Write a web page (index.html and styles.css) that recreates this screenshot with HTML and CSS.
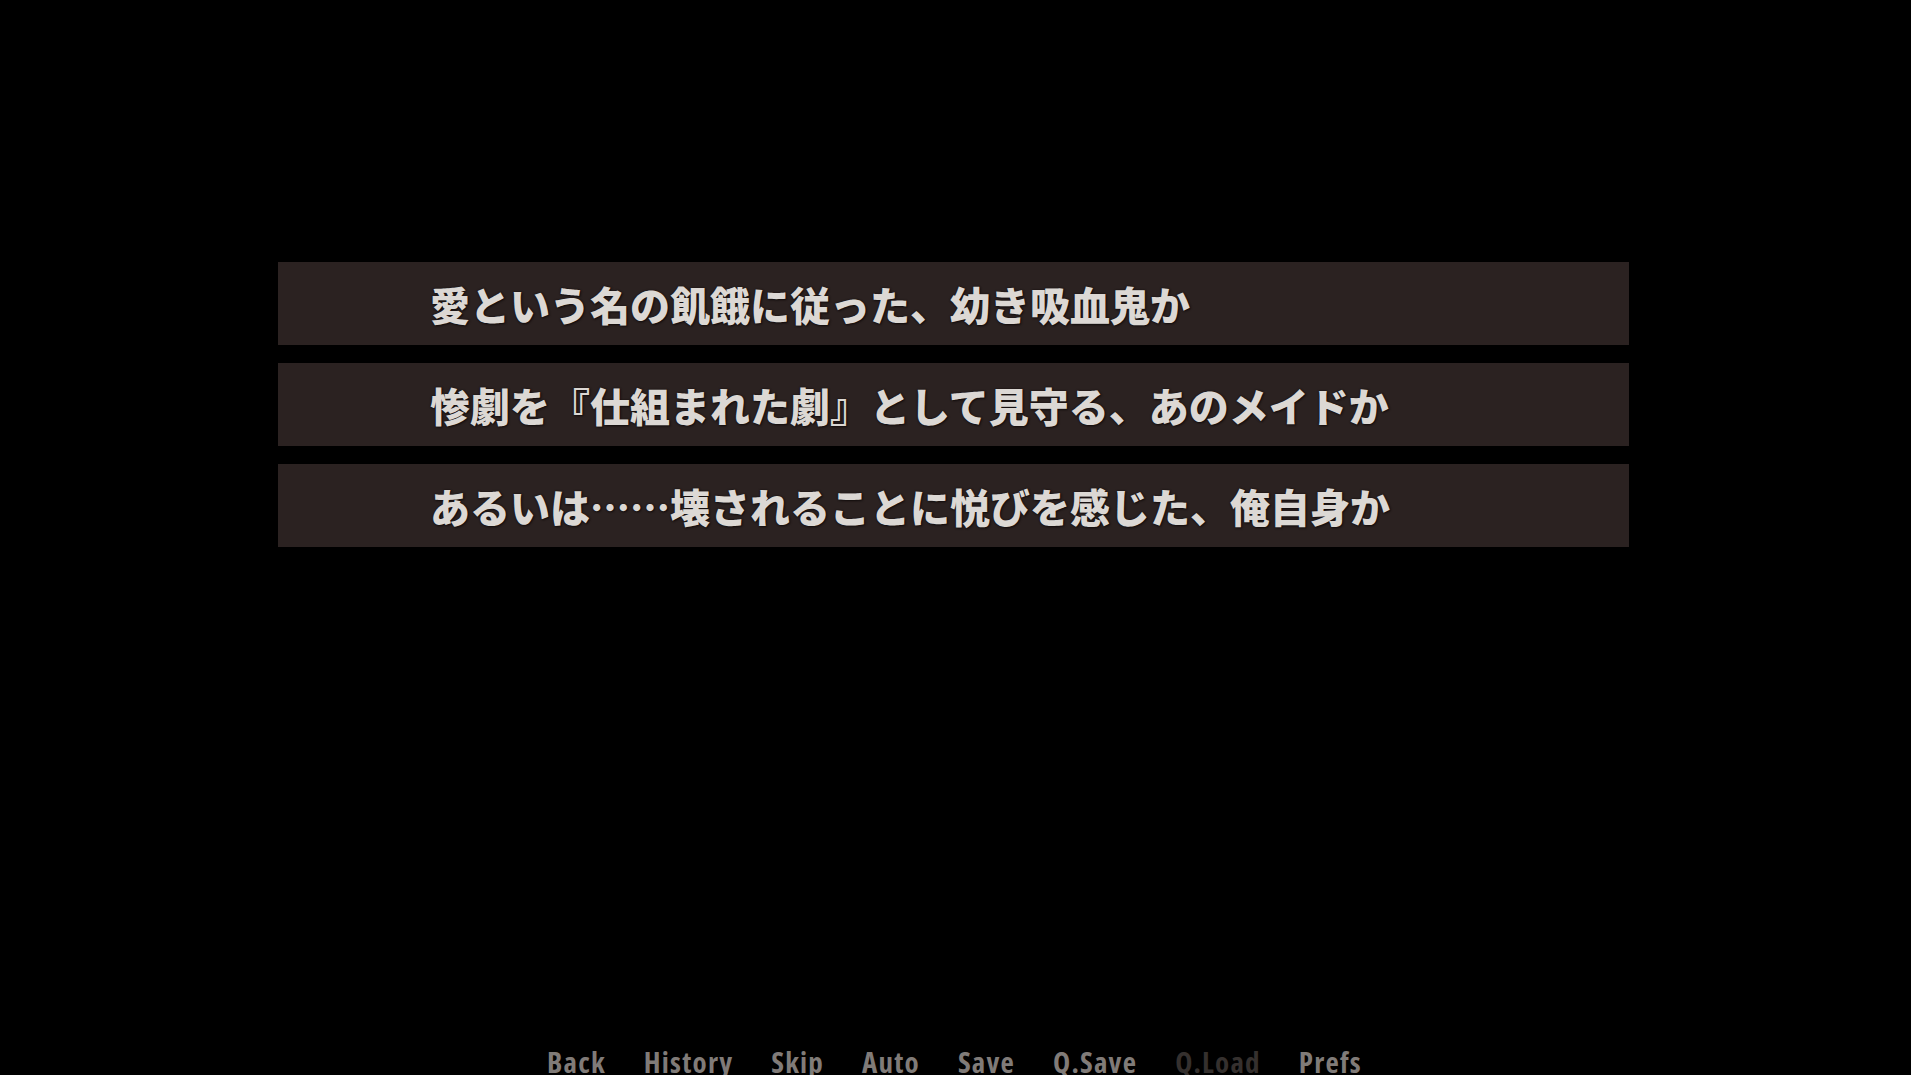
FILE: index.html
```html
<!DOCTYPE html>
<html lang="ja">
<head>
<meta charset="utf-8">
<title>Choice</title>
<link rel="stylesheet" href="styles.css">
</head>
<body>
<div class="screen">
  <div class="choices">
    <div class="choice"><span class="choice-text">愛という名の飢餓に従った、幼き吸血鬼か</span></div>
    <div class="choice"><span class="choice-text">惨劇を『仕組まれた劇』として見守る、あのメイドか</span></div>
    <div class="choice"><span class="choice-text">あるいは……壊されることに悦びを感じた、俺自身か</span></div>
  </div>
  <nav class="quick-menu">
    <span class="qm-item">Back</span>
    <span class="qm-item">History</span>
    <span class="qm-item">Skip</span>
    <span class="qm-item">Auto</span>
    <span class="qm-item">Save</span>
    <span class="qm-item">Q.Save</span>
    <span class="qm-item qm-disabled">Q.Load</span>
    <span class="qm-item">Prefs</span>
  </nav>
</div>
</body>
</html>
```
FILE: styles.css
```css
html, body {
  margin: 0;
  padding: 0;
  background: #000;
}
.screen {
  width: 1911px;
  height: 1075px;
  overflow: hidden;
  background: #000;
  display: flex;
  flex-direction: column;
}
.choices {
  margin-top: 262px;
  margin-left: 278px;
  width: 1351px;
  display: flex;
  flex-direction: column;
  gap: 18px;
}
.choice {
  height: 83px;
  background: #2b2221;
  display: flex;
  align-items: center;
  padding-left: 152px;
  box-sizing: border-box;
}
.choice-text {
  font-family: "Noto Sans CJK JP", "Noto Sans", sans-serif;
  font-weight: 900;
  font-size: 40px;
  line-height: 1;
  color: #dcd8d4;
  text-shadow: 0 0 2px #140e0e, 1px 1px 2px #140e0e;
}
.quick-menu {
  margin-top: 501px;
  margin-left: 547px;
  display: flex;
  gap: 38px;
  font-family: "Open Sans", "DejaVu Sans", sans-serif;
  font-weight: 700;
  font-stretch: 75%;
  font-size: 29px;
  letter-spacing: 1.2px;
  line-height: 28px;
  color: #807b78;
  white-space: nowrap;
}
.qm-disabled {
  color: #35302e;
}
```
